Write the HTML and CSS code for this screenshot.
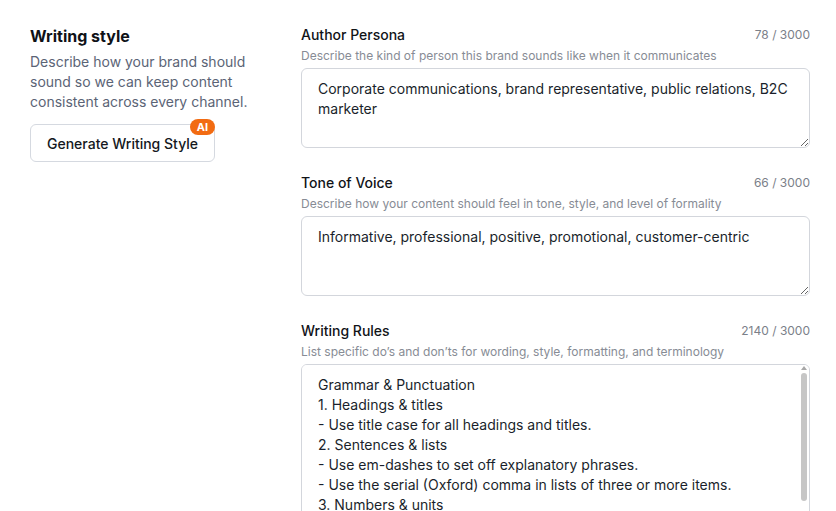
FILE: index.html
```html
<!DOCTYPE html>
<html>
<head>
<meta charset="utf-8">
<link rel="stylesheet" href="styles.css">
</head>
<body>
<div class="page">
  <aside class="intro">
    <h2 class="intro-title">Writing style</h2>
    <p class="intro-text">Describe how your brand should sound so we can keep content consistent across every channel.</p>
    <button class="gen-btn">Generate Writing Style<span class="ai-badge">AI</span></button>
  </aside>
  <main class="fields">
    <section class="field">
      <div class="field-head">
        <span class="field-label">Author Persona</span>
        <span class="field-count">78 / 3000</span>
      </div>
      <div class="field-help">Describe the kind of person this brand sounds like when it communicates</div>
      <textarea class="field-input">Corporate communications, brand representative, public relations, B2C marketer</textarea>
    </section>
    <section class="field">
      <div class="field-head">
        <span class="field-label">Tone of Voice</span>
        <span class="field-count">66 / 3000</span>
      </div>
      <div class="field-help">Describe how your content should feel in tone, style, and level of formality</div>
      <textarea class="field-input">Informative, professional, positive, promotional, customer-centric</textarea>
    </section>
    <section class="field">
      <div class="field-head">
        <span class="field-label">Writing Rules</span>
        <span class="field-count">2140 / 3000</span>
      </div>
      <div class="field-help">List specific do’s and don’ts for wording, style, formatting, and terminology</div>
      <div class="input-wrap">
        <textarea class="field-input tall">Grammar &amp; Punctuation
1. Headings &amp; titles
- Use title case for all headings and titles.
2. Sentences &amp; lists
- Use em-dashes to set off explanatory phrases.
- Use the serial (Oxford) comma in lists of three or more items.
3. Numbers &amp; units
- Spell out numbers one through nine; use numerals for 10 and above.
- Always use numerals for percentages, measurements, and prices.
4. Dates &amp; times
- Write dates as Month Day, Year (e.g., January 5, 2025).
- Use a.m. and p.m. in lowercase with periods.
Word Choice
- Prefer active voice over passive voice.
- Avoid jargon unless the audience expects it.
- Use "customers" instead of "users" in marketing copy.
- Do not use exclamation marks in body copy.
Formatting
- Keep paragraphs to three sentences or fewer.
- Use bulleted lists for three or more parallel items.
- Bold key terms on first mention only.
Terminology
- Always capitalize product names.
- Never abbreviate the company name.</textarea>
        <div class="fake-scroll">
          <span class="scroll-arrow"></span>
          <span class="scroll-thumb"></span>
        </div>
      </div>
    </section>
  </main>
</div>
</body>
</html>
```
FILE: styles.css
```css
* { box-sizing: border-box; }
html, body { margin: 0; padding: 0; background: #ffffff; }
body {
  font-family: Inter, "Noto Sans", sans-serif;
  color: #111418;
  overflow: hidden;
  height: 511px;
}
.page {
  display: flex;
  padding: 24px 26px 0 30px;
  gap: 50px;
}
.intro {
  width: 221px;
  flex: none;
}
.intro-title {
  margin: 0;
  font-size: 16px;
  line-height: 24px;
  font-weight: 700;
  color: #0f1217;
}
.intro-text {
  margin: 4px 0 0;
  font-size: 14px;
  line-height: 20px;
  color: #5b6476;
}
.gen-btn {
  position: relative;
  margin-top: 12px;
  height: 38px;
  padding: 0 16px;
  background: #fff;
  border: 1px solid #d5d9e0;
  border-radius: 6px;
  font-family: Inter, "Noto Sans", sans-serif;
  font-size: 14px;
  font-weight: 500;
  color: #141821;
}
.ai-badge {
  position: absolute;
  top: -6px;
  right: -1px;
  height: 16px;
  padding: 0 7px;
  border-radius: 8px;
  background: #f26b12;
  color: #fff;
  font-size: 11px;
  font-weight: 700;
  line-height: 16px;
}
.fields {
  flex: 1;
  display: flex;
  flex-direction: column;
  gap: 24px;
}
.field {
  display: flex;
  flex-direction: column;
}
.field-head {
  display: flex;
  justify-content: space-between;
  align-items: center;
  height: 20px;
}
.field-label {
  font-size: 14px;
  font-weight: 500;
  color: #111418;
}
.field-count {
  font-size: 12px;
  color: #7b8089;
}
.field-help {
  margin-top: 4px;
  font-size: 12px;
  line-height: 16px;
  color: #878c95;
}
.field-input {
  margin-top: 4px;
  height: 80px;
  padding: 10px 16px;
  border: 1px solid #d3d6dc;
  border-radius: 6px;
  font-family: Inter, "Noto Sans", sans-serif;
  font-size: 14px;
  line-height: 20px;
  color: #1a1f2b;
  resize: vertical;
  outline: none;
  scrollbar-width: none;
}
.input-wrap {
  position: relative;
  display: flex;
  flex-direction: column;
}
.field-input.tall {
  height: 240px;
  padding-right: 24px;
}
.fake-scroll {
  position: absolute;
  top: 6px;
  right: 3px;
  width: 6px;
  display: flex;
  flex-direction: column;
  align-items: center;
}
.scroll-arrow {
  width: 0;
  height: 0;
  border-left: 3px solid transparent;
  border-right: 3px solid transparent;
  border-bottom: 4px solid #a8a8a8;
}
.scroll-thumb {
  margin-top: 3px;
  width: 6px;
  height: 128px;
  border-radius: 3px;
  background: #c6c6c6;
}
```
